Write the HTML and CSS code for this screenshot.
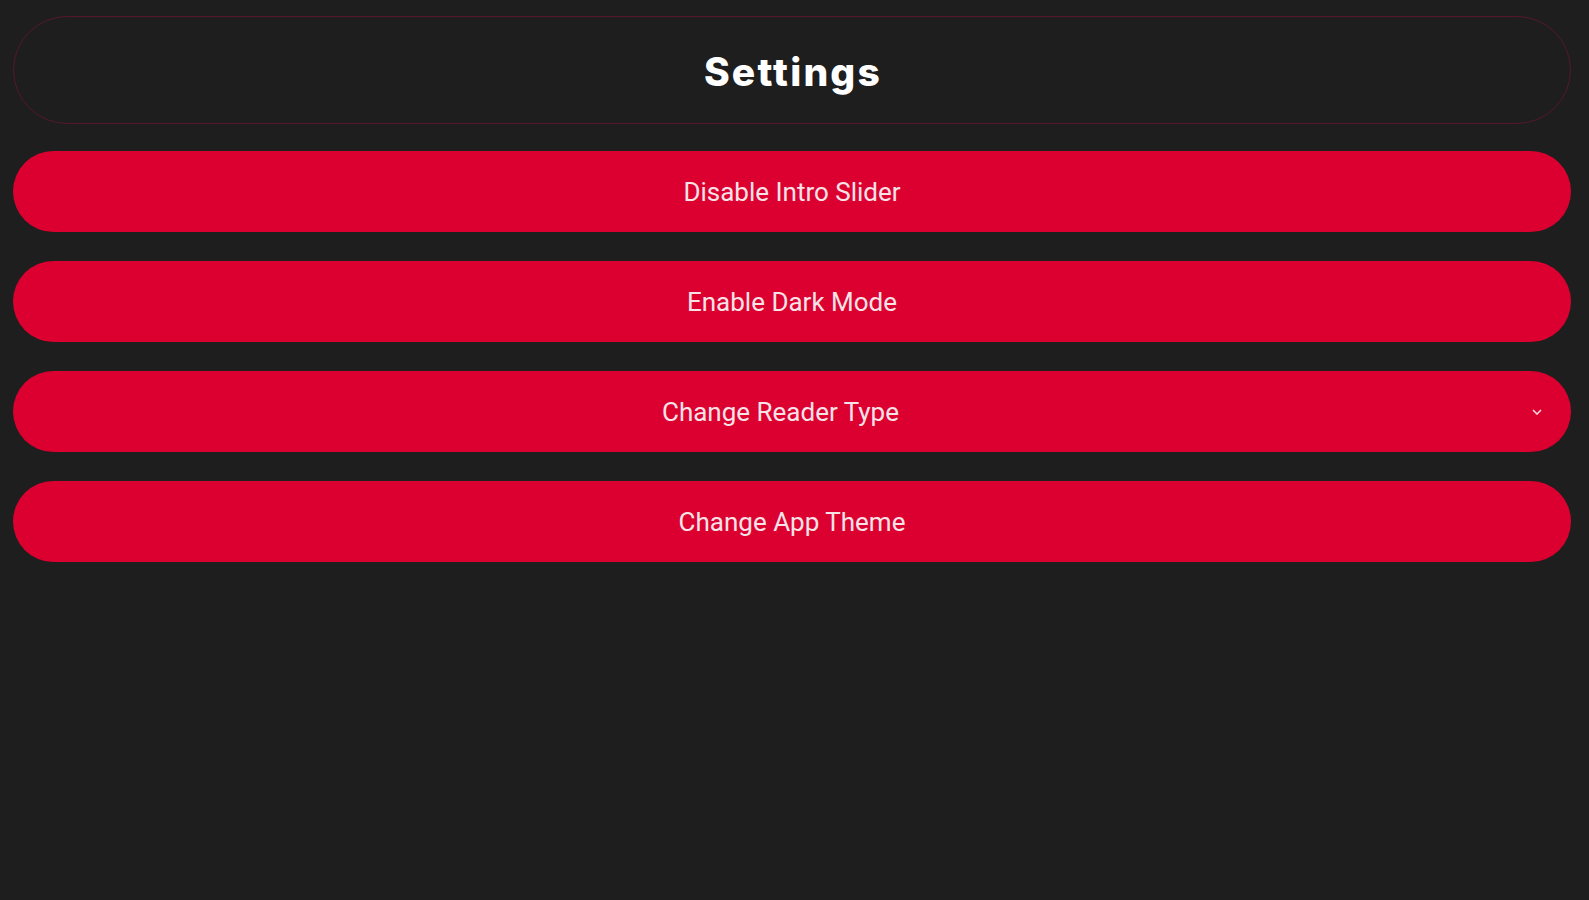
FILE: index.html
```html
<!DOCTYPE html>
<html>
<head>
<meta charset="utf-8">
<link rel="stylesheet" href="styles.css">
</head>
<body>
<div class="page">
  <header class="title-bar"><h1 class="title">Settings</h1></header>
  <div class="list">
    <button class="item"><span class="label">Disable Intro Slider</span></button>
    <button class="item"><span class="label">Enable Dark Mode</span></button>
    <button class="item select"><span class="label">Change Reader Type</span><svg class="chev" width="10" height="6" viewBox="0 0 10 6"><path d="M1 1l4 4 4-4" fill="none" stroke="#f3d6dc" stroke-width="1.6"/></svg></button>
    <button class="item"><span class="label">Change App Theme</span></button>
  </div>
</div>
</body>
</html>
```
FILE: styles.css
```css
html, body {
  margin: 0;
  padding: 0;
  background: #1e1e1e;
  height: 100%;
}
.page {
  padding: 16px 18px 0 13px;
  display: flex;
  flex-direction: column;
}
.title-bar {
  height: 108px;
  box-sizing: border-box;
  border: 1.5px solid #55182a;
  border-radius: 54px;
  display: flex;
  align-items: center;
  justify-content: center;
}
.title {
  margin: 0;
  font-family: Inter, sans-serif;
  font-weight: 800;
  font-size: 39px;
  color: #ffffff;
  letter-spacing: 2.2px;
  padding-left: 2px;
  padding-top: 2px;
}
.list {
  margin-top: 27px;
  display: flex;
  flex-direction: column;
  gap: 29px;
}
.item {
  height: 81px;
  border: none;
  border-radius: 41px;
  background: #dc0030;
  display: flex;
  align-items: center;
  justify-content: center;
  padding: 0 20px;
  font-family: Roboto, sans-serif;
  font-size: 26px;
  color: #f6e3e7;
  letter-spacing: 0;
}
.select .label {
  flex: 1;
  text-align: center;
  padding-left: 8px;
}
.select .chev {
  margin-right: 9px;
  margin-left: 12px;
  margin-top: 0px;
}
```
